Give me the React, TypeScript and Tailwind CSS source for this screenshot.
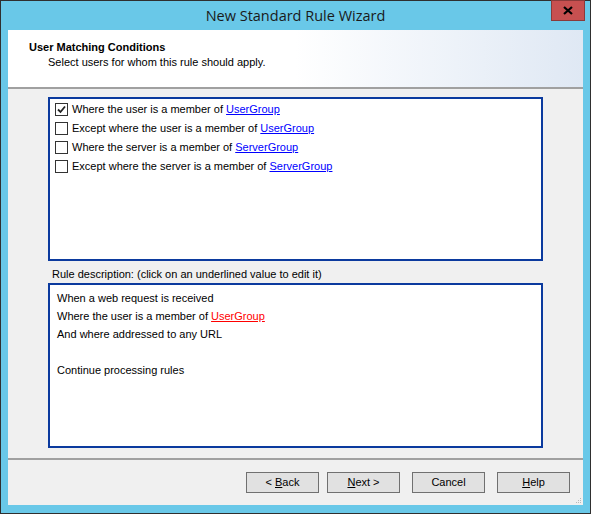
import React, { useState } from 'react';

const conditions = [
  { text: 'Where the user is a member of ', link: 'UserGroup', checked: true },
  { text: 'Except where the user is a member of ', link: 'UserGroup', checked: false },
  { text: 'Where the server is a member of ', link: 'ServerGroup', checked: false },
  { text: 'Except where the server is a member of ', link: 'ServerGroup', checked: false },
];

function CheckBox({ checked, onToggle }: { checked: boolean; onToggle: () => void }) {
  return (
    <button
      onClick={onToggle}
      className="w-[13px] h-[13px] border border-[#333] bg-white flex items-center justify-center shrink-0"
    >
      {checked && (
        <svg width="9" height="9" viewBox="0 0 9 9">
          <path d="M1 4.5 L3.5 7 L8 1.5" stroke="#222" strokeWidth="1.8" fill="none" />
        </svg>
      )}
    </button>
  );
}

export default function App() {
  const [checks, setChecks] = useState(conditions.map(c => c.checked));

  const toggle = (i: number) => {
    setChecks(prev => prev.map((v, j) => (j === i ? !v : v)));
  };

  return (
    <div className="w-[591px] h-[514px] bg-[#69c8e8] border border-[#2f2f2f] flex flex-col font-['Liberation_Sans',Arial,sans-serif] text-[11px] text-black">
      {/* Title bar */}
      <div className="h-[29px] flex items-start shrink-0 relative">
        <div className="flex-1 text-center pt-[4px] text-[14.5px] text-[#1a1a1a] font-['Open_Sans',sans-serif]">
          New Standard Rule Wizard
        </div>
        <div className="absolute right-[5px] top-[-1px] w-[34px] h-[21px] bg-[#c75050] border border-[#8a3a3a] flex items-center justify-center">
          <svg width="10" height="9" viewBox="0 0 10 9">
            <path d="M1 1 L9 8 M9 1 L1 8" stroke="#000" strokeWidth="2.2" />
          </svg>
        </div>
      </div>

      {/* Client area */}
      <div className="mx-[7px] w-[575px] h-[475px] bg-[#f0f0f0] flex flex-col">
        {/* Header */}
        <div className="h-[59px] bg-gradient-to-r from-white from-50% to-[#dfe8f4] border-b-2 border-[#a0a0a0] pl-[21px] pt-[10px]">
          <div className="font-bold leading-[14px]">User Matching Conditions</div>
          <div className="pl-[19px] leading-[16px]">Select users for whom this rule should apply.</div>
        </div>

        {/* Conditions list */}
        <div className="mt-[8px] ml-[40px] w-[495px] h-[164px] bg-white border-2 border-[#0b3a9e] pt-[1px] pl-[5px]">
          {conditions.map((c, i) => (
            <div key={i} className="h-[19px] flex items-center gap-[4px]">
              <CheckBox checked={checks[i]} onToggle={() => toggle(i)} />
              <span>
                {c.text}
                <a className="text-[#0000ff] underline cursor-pointer">{c.link}</a>
              </span>
            </div>
          ))}
        </div>

        <div className="ml-[44px] mt-[4px] h-[18px] leading-[18px]">
          Rule description: (click on an underlined value to edit it)
        </div>

        {/* Rule description */}
        <div className="ml-[40px] w-[495px] h-[165px] bg-white border-2 border-[#0b3a9e] pt-[4px] pl-[7px] leading-[18px]">
          <div>When a web request is received</div>
          <div>
            Where the user is a member of <a className="text-[#ff0000] underline cursor-pointer">UserGroup</a>
          </div>
          <div>And where addressed to any URL</div>
          <div>&nbsp;</div>
          <div>Continue processing rules</div>
        </div>

        {/* Footer */}
        <div className="mt-[10px] border-t-2 border-[#a0a0a0] flex-1 relative">
          <div className="flex gap-[8px] pl-[238px] pt-[12px]">
            <button className="w-[73px] h-[21px] bg-[#e1e1e1] border border-[#707070]">
              &lt; <span className="underline">B</span>ack
            </button>
            <button className="w-[73px] h-[21px] bg-[#e1e1e1] border border-[#707070]">
              <span className="underline">N</span>ext &gt;
            </button>
            <button className="ml-[4px] w-[73px] h-[21px] bg-[#e1e1e1] border border-[#707070]">
              Cancel
            </button>
            <button className="ml-[4px] w-[73px] h-[21px] bg-[#e1e1e1] border border-[#707070]">
              <span className="underline">H</span>elp
            </button>
          </div>
          <div className="absolute right-[2px] bottom-[2px] grid grid-cols-3 gap-[1px]">
            {[0, 0, 1, 0, 1, 1, 1, 1, 1].map((v, i) => (
              <div key={i} className={`w-[1px] h-[1px] ${v ? 'bg-[#b8b8b8]' : ''}`} />
            ))}
          </div>
        </div>
      </div>
    </div>
  );
}
